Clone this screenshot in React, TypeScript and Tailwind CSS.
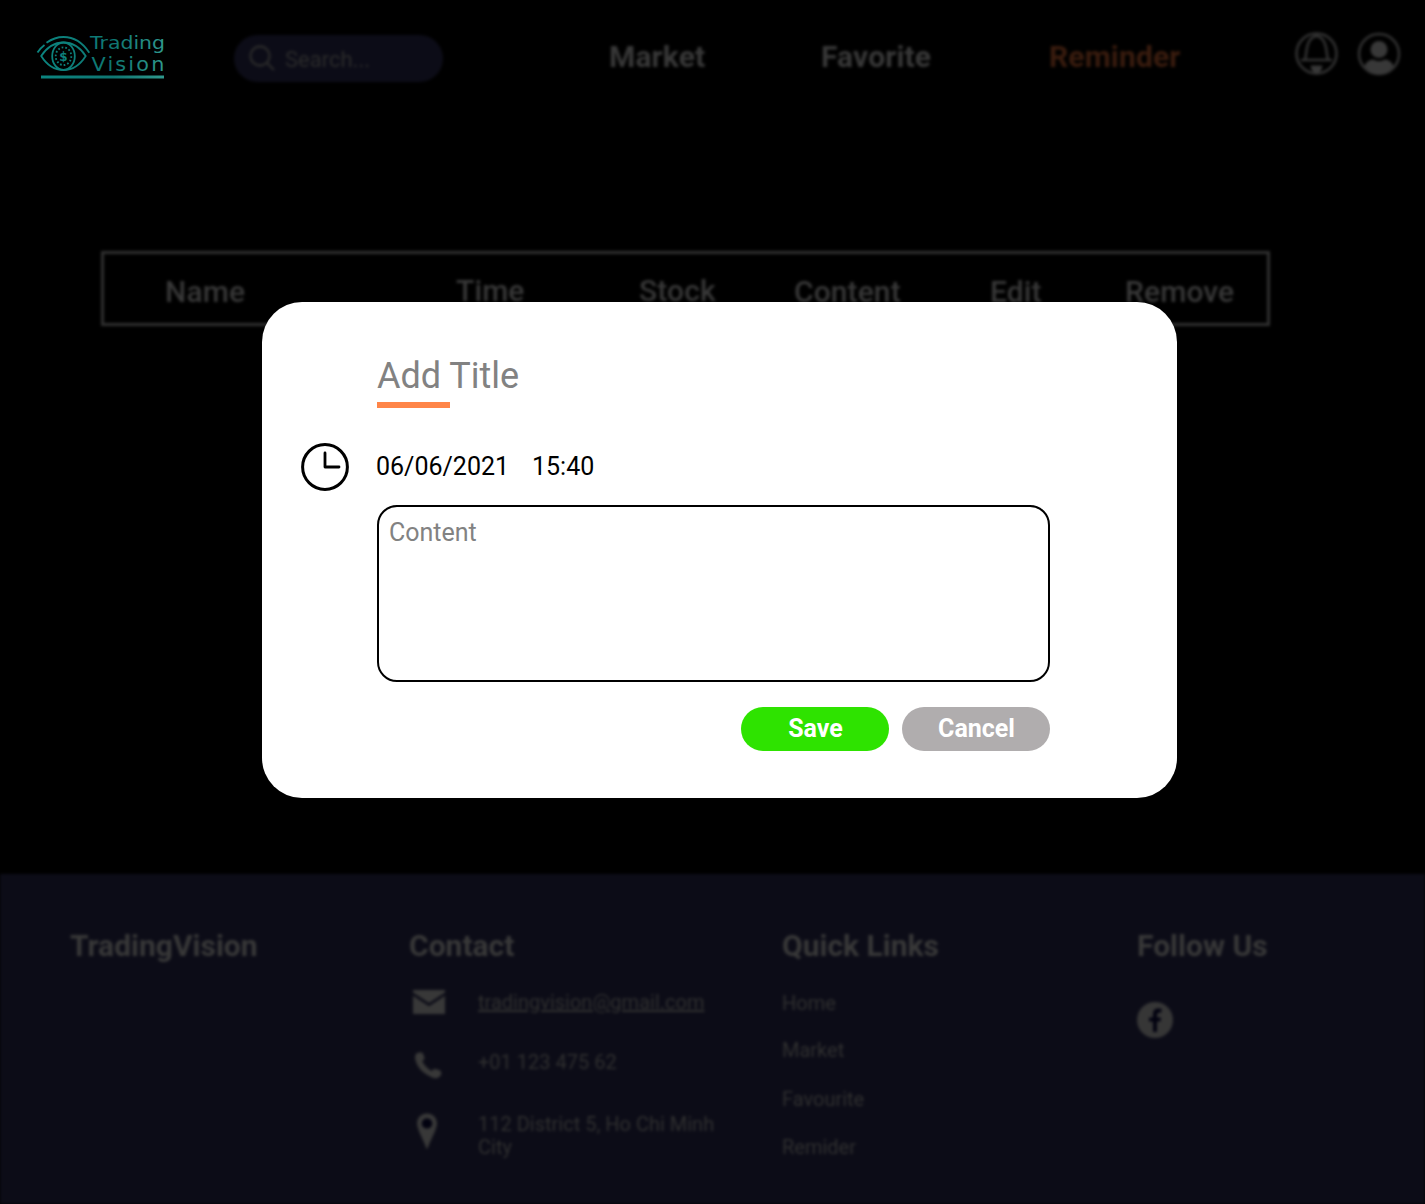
import React from "react";

function Logo() {
  return (
    <svg className="block h-[48px] w-[132px]" viewBox="36 33 132 48" fill="none">
      <defs>
        <linearGradient id="teal" gradientUnits="userSpaceOnUse" x1="37" y1="0" x2="165" y2="0">
          <stop offset="0" stopColor="#0b8580" />
          <stop offset="0.6" stopColor="#0f7672" />
          <stop offset="1" stopColor="#30998e" />
        </linearGradient>
      </defs>
      <g stroke="url(#teal)" strokeWidth="1.8">
        <path d="M37.500 52.500Q40.500 48 44.500 45" />
        <path d="M46.500 42.800Q54.500 37 63.500 37Q79 37 89.300 52.800" />
        <path d="M41.200 56Q50 42.500 63.500 42.500Q77 42.500 85.700 56Q77 70 63.500 70Q50 70 41.200 56Z" />
        <ellipse cx="63.500" cy="56.200" rx="11.300" ry="13.700" />
        <ellipse cx="63.500" cy="56.200" rx="7.800" ry="8.800" strokeDasharray="1.700 2" />
        <path d="M41 77H164" strokeWidth="2.800" />
      </g>
      <g fill="url(#teal)" fontFamily="DejaVu Sans">
        <text x="63.500" y="60.700" textAnchor="middle" fontSize="12" fontWeight="700">$</text>
        <text x="90" y="49.300" fontSize="18.500" textLength="75" lengthAdjust="spacingAndGlyphs">Trading</text>
        <text x="91.500" y="70.500" fontSize="19" letterSpacing="2" textLength="75" lengthAdjust="spacingAndGlyphs">Vision</text>
      </g>
    </svg>
  );
}

function Header() {
  return (
    <header className="flex h-[251px] items-start text-[30px] leading-[35px] font-bold">
      <div className="mt-[35px] ml-[234px] flex h-[47px] w-[209px] items-center rounded-full bg-[#0c0c17] pl-[15px]">
        <svg className="mb-0.5 h-[26px] w-[26px]" viewBox="0 0 26 26" fill="none" stroke="#2a2a2a" strokeWidth="2.300">
          <circle cx="11" cy="11" r="9.500" />
          <path d="M17.500 17.500L25 25" />
        </svg>
        <span className="mt-[3px] ml-[10px] text-[22px] leading-[26px] font-normal text-[#2b2b2b]">Search...</span>
      </div>
      <nav className="mt-[39px] ml-[166px] flex tracking-[0.15px]">
        <a className="w-[212px]">Market</a>
        <a className="w-[228px]">Favorite</a>
        <a className="w-[246px] text-[#3a1c0e]">Reminder</a>
      </nav>
      <svg className="mt-[32px] h-[44px] w-[44px]" viewBox="0 0 44 44" fill="none" stroke="#333" strokeWidth="2.500">
        <circle cx="21.500" cy="21.500" r="20" />
        <path d="M6 28H37M10 28C11.500 23 11 13 15 8Q18 4 21.500 4Q25 4 28 8C32 13 31.500 23 33 28" />
        <path d="M15.500 33.500H27.500Q26.500 41 21.500 41Q16.500 41 15.500 33.500Z" fill="#383838" stroke="none" />
      </svg>
      <svg className="mt-[32px] ml-[18px] h-[44px] w-[44px]" viewBox="0 0 44 44" fill="none">
        <circle cx="22" cy="22" r="20" stroke="#333" strokeWidth="2.500" />
        <circle cx="22" cy="17.500" r="8.500" fill="#383838" />
        <path d="M7.500 34Q10 28 16 27.500Q22 31 28 27.500Q34 28 36.500 34Q30 42.500 22 42.500Q14 42.500 7.500 34Z" fill="#383838" />
      </svg>
    </header>
  );
}

function TableHead() {
  return (
    <div className="ml-[101px] flex h-[75px] w-[1169px] border-[3px] border-[#303030] pt-5 pl-[61px] text-[30px] leading-[35px] font-medium tracking-[0.1px]">
      <span className="w-[291px]">Name</span>
      <span className="-mt-px w-[183px]">Time</span>
      <span className="-mt-px w-[155px]">Stock</span>
      <span className="w-[196px]">Content</span>
      <span className="w-[135px]">Edit</span>
      <span>Remove</span>
    </div>
  );
}

function Heading({ children }: { children: React.ReactNode }) {
  return <h2 className="text-[30px] leading-[35px] font-bold">{children}</h2>;
}

function Footer() {
  return (
    <footer className="mt-[548px] flex h-[330px] bg-[#0c0c17] pt-[54px] pl-[70px] text-[20px] leading-[23px]">
      <section className="w-[339px]"><Heading>TradingVision</Heading></section>
      <section className="w-[373px]">
        <Heading>Contact</Heading>
        <div className="mt-[26px] ml-1 flex h-[62px] items-start">
          <svg className="mt-px h-[24px] w-[32px]" viewBox="0 0 33 25" preserveAspectRatio="none">
            <path d="M0 0H33V2.500L16.500 13.500L0 2.500ZM0 6L16.500 17L33 6V25H0Z" fill="#383838" />
          </svg>
          <span className="mt-[2px] ml-[33px] text-[#303030] underline">tradingvision@gmail.com</span>
        </div>
        <div className="ml-1 flex h-[63px] items-start">
          <svg className="mt-px ml-[2px] h-[27px] w-[27px]" viewBox="0 0 28 28">
            <path d="M1 2Q4-1 8 1L10 6Q10 8 7.500 9.500Q10.500 15.500 17.500 20Q19 17 21 17.500L26 19Q28 21 27 24Q24 28 19 27Q2 20 0 6Q0 3 1 2Z" fill="#383838" />
          </svg>
          <span className="ml-[36px] text-[#303030]">+01 123 475 62</span>
        </div>
        <div className="ml-1 flex items-start">
          <svg className="-mt-px ml-1 h-[36px] w-[20px]" viewBox="0 0 21 37">
            <circle cx="10.500" cy="10.500" r="6" fill="#020210" />
            <path fillRule="evenodd" d="M10.500 0C4.500 0 0 4.500 0 10.500C0 17 8 30 9.500 36Q10.500 38 11.500 36C13 30 21 17 21 10.500C21 4.500 16.500 0 10.500 0ZM10.500 5A5.500 5.500 0 1 1 10.500 16A5.500 5.500 0 0 1 10.500 5Z" fill="#383838" />
          </svg>
          <span className="-mt-px ml-[41px] w-[260px] shrink-0 text-[#303030]">112 District 5, Ho Chi Minh<br />City</span>
        </div>
      </section>
      <section className="w-[355px]">
        <Heading>Quick Links</Heading>
        <ul className="mt-[29px] text-[#303030]">
          <li className="h-[47px]">Home</li>
          <li className="h-[49px]">Market</li>
          <li className="h-12">Favourite</li>
          <li>Remider</li>
        </ul>
      </section>
      <section>
        <Heading>Follow Us</Heading>
        <svg className="mt-[39px] h-[36px] w-[36px]" viewBox="0 0 36 36">
          <circle cx="18" cy="18" r="18" fill="#363636" />
          <path d="M16 30V19.500H12V15.500H16V12Q16 6.500 21 6.500H24.500V10.500H22.500Q20 10.500 20 13V15.500H24L23.500 19.500H20V30Z" fill="#020210" />
        </svg>
      </section>
    </footer>
  );
}

function ReminderDialog() {
  return (
    <div role="dialog" className="h-[496px] w-[915px] rounded-[40px] bg-white pt-[53px] pl-[39px]">
      <div className="ml-[76px] h-[53px] w-fit text-[36px] leading-[43px] text-[#828282]">
        Add Title
        <div className="mt-1 h-[6px] w-[73px] bg-[#ff8548]" />
      </div>
      <div className="mt-[35px] flex h-12 items-center">
        <svg className="h-12 w-12" viewBox="0 0 48 48" fill="none" stroke="#000" strokeWidth="3">
          <circle cx="24" cy="24" r="22.400" />
          <path d="M24 10V24H38" strokeLinecap="round" strokeLinejoin="round" strokeWidth="2.800" />
        </svg>
        <div className="mb-[2px] ml-[27px] flex text-[25px] leading-[29px]">
          <span className="w-[156px]">06/06/2021</span>
          <span>15:40</span>
        </div>
      </div>
      <div className="mt-[14px] ml-[76px] h-[177px] w-[673px] rounded-[20px] border-2 border-black pt-[11px] pl-[10px] text-[25px] leading-[29px] text-[#828282]">
        Content
      </div>
      <div className="mt-[25px] ml-[440px] flex gap-[13px] text-[25px] leading-[29px] font-bold text-white">
        <button className="h-11 w-[148px] rounded-full bg-[#2ee300] pb-[2px] pl-px">Save</button>
        <button className="h-11 w-[148px] rounded-full bg-[#b0adae] pb-px pl-px">Cancel</button>
      </div>
    </div>
  );
}

export default function App() {
  return (
    <div className="relative h-[1204px] w-full overflow-hidden bg-black font-['Roboto',sans-serif]">
      <div className="h-full text-[#383838] blur-[1.8px]">
        <Header />
        <TableHead />
        <Footer />
      </div>
      <div className="absolute top-[33px] left-[36px]"><Logo /></div>
      <div className="absolute top-[302px] left-[262px]"><ReminderDialog /></div>
    </div>
  );
}
